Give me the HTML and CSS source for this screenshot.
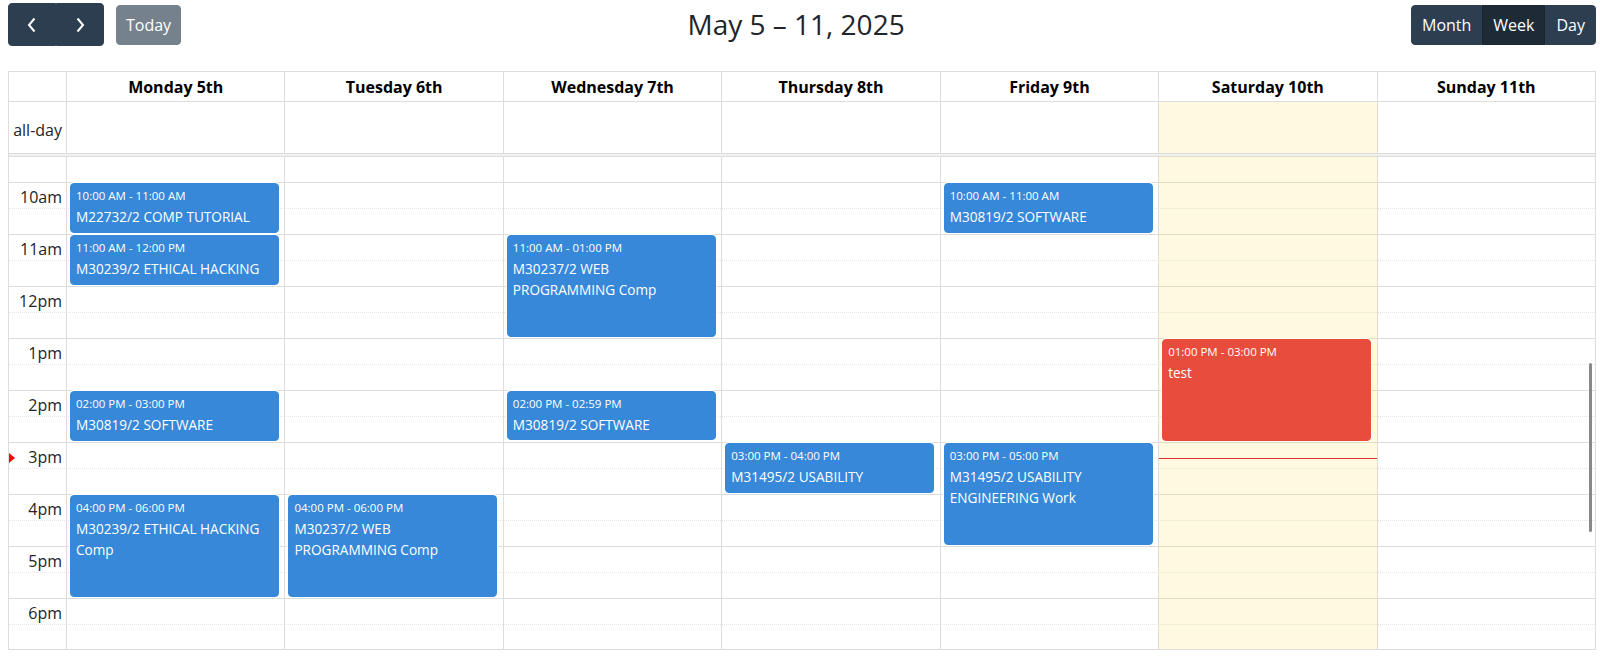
FILE: index.html
```html
<!DOCTYPE html>
<html lang="en">
<head>
<meta charset="utf-8">
<title>Week calendar</title>
<link rel="stylesheet" href="styles.css">
</head>
<body>
<div class="cal">
  <div class="toolbar">
    <div class="chunk">
      <div class="btn-group">
        <button class="btn nav" aria-label="prev"><svg width="12" height="16" viewBox="0 0 12 16"><polyline points="8.5,1.5 3,8 8.5,14.5" fill="none" stroke="#fff" stroke-width="2"/></svg></button>
        <button class="btn nav" aria-label="next"><svg width="12" height="16" viewBox="0 0 12 16"><polyline points="3.5,1.5 9,8 3.5,14.5" fill="none" stroke="#fff" stroke-width="2"/></svg></button>
      </div>
      <button class="btn today-btn">Today</button>
    </div>
    <h2 class="title">May 5 – 11, 2025</h2>
    <div class="chunk">
      <div class="btn-group">
        <button class="btn">Month</button>
        <button class="btn active">Week</button>
        <button class="btn">Day</button>
      </div>
    </div>
  </div>

  <div class="grid">
    <div class="row head">
      <div class="cell axis"></div>
      <div class="cell">Monday 5th</div>
      <div class="cell">Tuesday 6th</div>
      <div class="cell">Wednesday 7th</div>
      <div class="cell">Thursday 8th</div>
      <div class="cell">Friday 9th</div>
      <div class="cell">Saturday 10th</div>
      <div class="cell">Sunday 11th</div>
    </div>
    <div class="row allday">
      <div class="cell axis">all-day</div>
      <div class="cell"></div>
      <div class="cell"></div>
      <div class="cell"></div>
      <div class="cell"></div>
      <div class="cell"></div>
      <div class="cell is-today"></div>
      <div class="cell"></div>
    </div>
    <div class="divider"></div>
    <div class="body">
      <div class="slots">
        <div class="slot first"><div class="lbl"></div></div>
        <div class="slot major"><div class="lbl">10am</div></div>
        <div class="slot"><div class="lbl"></div></div>
        <div class="slot major"><div class="lbl">11am</div></div>
        <div class="slot"><div class="lbl"></div></div>
        <div class="slot major"><div class="lbl">12pm</div></div>
        <div class="slot"><div class="lbl"></div></div>
        <div class="slot major"><div class="lbl">1pm</div></div>
        <div class="slot"><div class="lbl"></div></div>
        <div class="slot major"><div class="lbl">2pm</div></div>
        <div class="slot"><div class="lbl"></div></div>
        <div class="slot major"><div class="lbl">3pm</div></div>
        <div class="slot"><div class="lbl"></div></div>
        <div class="slot major"><div class="lbl">4pm</div></div>
        <div class="slot"><div class="lbl"></div></div>
        <div class="slot major"><div class="lbl">5pm</div></div>
        <div class="slot"><div class="lbl"></div></div>
        <div class="slot major"><div class="lbl">6pm</div></div>
        <div class="slot"><div class="lbl"></div></div>
      </div>
      <div class="cols">
        <div class="col axis-col"><div class="now-arrow"></div></div>
        <div class="col">
          <div class="ev" style="top:27px;height:50px"><div class="t">10:00 AM - 11:00 AM</div><div class="n">M22732/2 COMP TUTORIAL</div></div>
          <div class="ev" style="top:79px;height:50px"><div class="t">11:00 AM - 12:00 PM</div><div class="n">M30239/2 ETHICAL HACKING</div></div>
          <div class="ev" style="top:235px;height:50px"><div class="t">02:00 PM - 03:00 PM</div><div class="n">M30819/2 SOFTWARE</div></div>
          <div class="ev" style="top:339px;height:102px"><div class="t">04:00 PM - 06:00 PM</div><div class="n">M30239/2 ETHICAL HACKING Comp</div></div>
        </div>
        <div class="col">
          <div class="ev" style="top:339px;height:102px"><div class="t">04:00 PM - 06:00 PM</div><div class="n">M30237/2 WEB PROGRAMMING Comp</div></div>
        </div>
        <div class="col">
          <div class="ev" style="top:79px;height:102px"><div class="t">11:00 AM - 01:00 PM</div><div class="n">M30237/2 WEB PROGRAMMING Comp</div></div>
          <div class="ev" style="top:235px;height:49px"><div class="t">02:00 PM - 02:59 PM</div><div class="n">M30819/2 SOFTWARE</div></div>
        </div>
        <div class="col">
          <div class="ev" style="top:287px;height:50px"><div class="t">03:00 PM - 04:00 PM</div><div class="n">M31495/2 USABILITY</div></div>
        </div>
        <div class="col">
          <div class="ev" style="top:27px;height:50px"><div class="t">10:00 AM - 11:00 AM</div><div class="n">M30819/2 SOFTWARE</div></div>
          <div class="ev" style="top:287px;height:102px"><div class="t">03:00 PM - 05:00 PM</div><div class="n">M31495/2 USABILITY ENGINEERING Work</div></div>
        </div>
        <div class="col is-today">
          <div class="ev red" style="top:183px;height:102px"><div class="t">01:00 PM - 03:00 PM</div><div class="n">test</div></div>
          <div class="now-line"></div>
        </div>
        <div class="col"></div>
      </div>
      <div class="thumb"></div>
    </div>
  </div>
</div>
</body>
</html>
```

FILE: styles.css
```css
* { box-sizing: border-box; }

body {
  margin: 0;
  font-family: "Open Sans", "Noto Sans", sans-serif;
  font-size: 16px;
  color: #212529;
  background: #fff;
}

.cal {
  margin-left: 8px;
  width: 1588px;
}

/* toolbar */
.toolbar {
  display: flex;
  justify-content: space-between;
  align-items: center;
  height: 49px;
  margin-bottom: 22px;
}

.chunk {
  display: flex;
  align-items: center;
}

.btn-group {
  display: flex;
}

.btn {
  font-family: inherit;
  font-size: 16px;
  line-height: 1.5;
  height: 40px;
  padding: 0 10px;
  border: 1px solid #2c3e50;
  background: #2c3e50;
  color: #fff;
  border-radius: 4px;
  cursor: pointer;
}

.btn-group .btn {
  border-radius: 0;
}

.btn-group .btn:first-child {
  border-radius: 4px 0 0 4px;
}

.btn-group .btn:last-child {
  border-radius: 0 4px 4px 0;
}

.btn.nav {
  width: 48px;
  height: 43px;
  padding: 0;
  display: flex;
  align-items: center;
  justify-content: center;
}

.btn.active {
  background: #1e2b37;
  border-color: #1a252f;
}

.today-btn {
  margin-left: 12px;
  opacity: 0.65;
  padding: 0 9px;
}

.title {
  margin: 0;
  font-size: 28px;
  font-weight: 400;
  line-height: 1.2;
}

/* grid */
.grid {
  border: 1px solid #ddd;
}

.row {
  display: grid;
  grid-template-columns: 57px repeat(7, 1fr);
}

.row .cell {
  border-left: 1px solid #ddd;
}

.row .cell.axis {
  border-left: 0;
}

.head {
  height: 30px;
  border-bottom: 1px solid #ddd;
}

.head .cell {
  font-weight: 700;
  text-align: center;
  line-height: 30px;
  color: #000;
}

.allday {
  height: 51px;
}

.allday .axis {
  display: flex;
  align-items: center;
  justify-content: flex-end;
  padding-right: 4px;
  padding-top: 4px;
  color: #212529;
}

.is-today {
  background: rgba(255, 220, 40, 0.15);
}

.divider {
  height: 3px;
  border-top: 1px solid #ddd;
  background: rgba(208, 208, 208, 0.3);
}

.body {
  position: relative;
  height: 493px;
  overflow: hidden;
}

.slot {
  height: 26px;
  border-top: 1px dotted #e6e6e6;
}

.slot.major,
.slot.first {
  border-top: 1px solid #ddd;
}

.slot .lbl {
  width: 57px;
  text-align: right;
  padding-right: 4px;
  padding-top: 2px;
  line-height: 25px;
  font-size: 16px;
}

.cols {
  position: absolute;
  inset: 0;
  display: grid;
  grid-template-columns: 57px repeat(7, 1fr);
}

.col {
  position: relative;
  border-left: 1px solid #ddd;
}

.col.axis-col {
  border-left: 0;
}

.ev {
  position: absolute;
  left: 3px;
  right: 2.5%;
  background: #3788d8;
  border: 1px solid #3788d8;
  border-radius: 4px;
  box-shadow: 0 0 0 1px #fff;
  color: #fff;
  overflow: hidden;
  padding: 3px 5px 0;
}

.ev.red {
  background: #e74c3c;
  border-color: #e74c3c;
}

.ev .t {
  font-size: 11.5px;
  line-height: 17px;
  margin-bottom: 2px;
  white-space: nowrap;
}

.ev .n {
  font-size: 13.6px;
  line-height: 21.4px;
}

.now-line {
  position: absolute;
  left: 0;
  right: 0;
  top: 302px;
  height: 1px;
  background: #e3342f;
}

.now-arrow {
  position: absolute;
  left: 0;
  top: 297px;
  width: 0;
  height: 0;
  border-style: solid;
  border-width: 5px 0 5px 6px;
  border-color: transparent transparent transparent #f00;
}

.thumb {
  position: absolute;
  right: 3px;
  top: 207px;
  width: 3px;
  height: 169px;
  border-radius: 2px;
  background: #888;
}
```
